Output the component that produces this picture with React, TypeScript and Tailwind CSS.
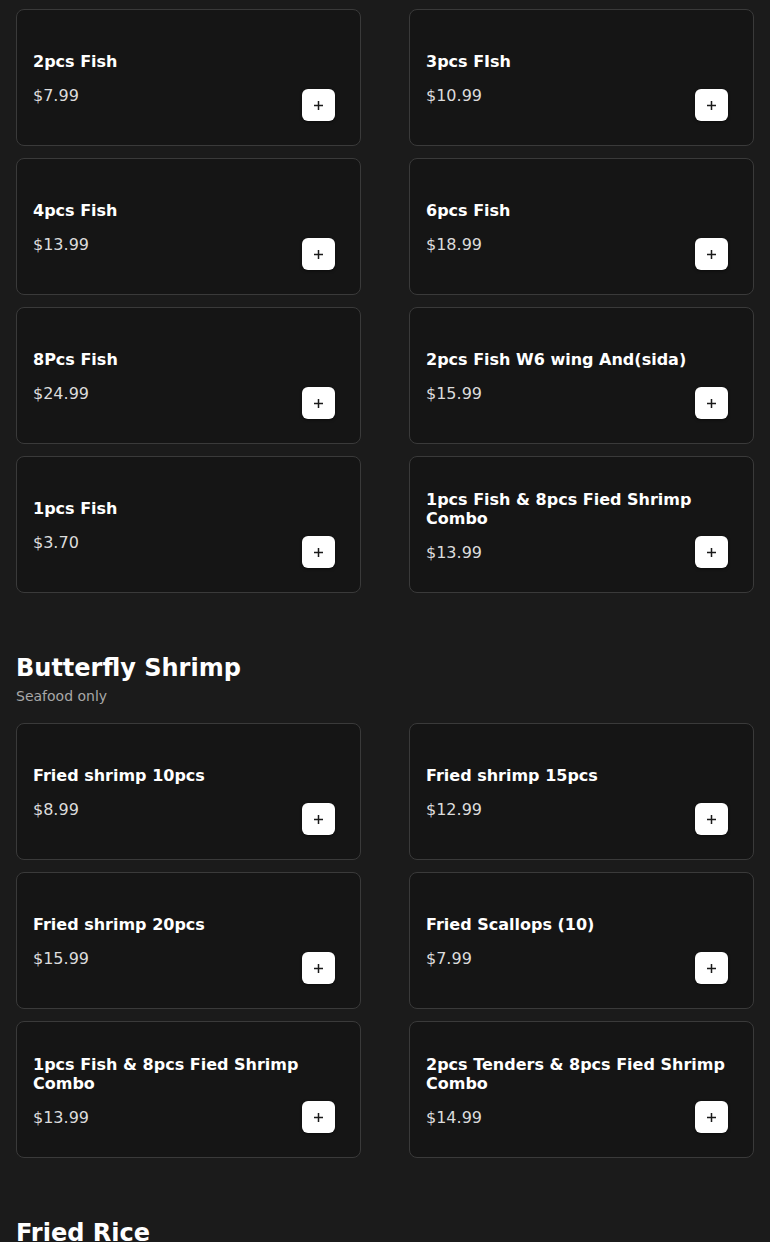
type MenuItem = { name: string; price: string };

type MenuSection = {
  title?: string;
  subtitle?: string;
  items: MenuItem[];
};

const sections: MenuSection[] = [
  {
    items: [
      { name: "2pcs Fish", price: "$7.99" },
      { name: "3pcs FIsh", price: "$10.99" },
      { name: "4pcs Fish", price: "$13.99" },
      { name: "6pcs Fish", price: "$18.99" },
      { name: "8Pcs Fish", price: "$24.99" },
      { name: "2pcs Fish W6 wing And(sida)", price: "$15.99" },
      { name: "1pcs Fish", price: "$3.70" },
      { name: "1pcs Fish & 8pcs Fied Shrimp Combo", price: "$13.99" },
    ],
  },
  {
    title: "Butterfly Shrimp",
    subtitle: "Seafood only",
    items: [
      { name: "Fried shrimp 10pcs", price: "$8.99" },
      { name: "Fried shrimp 15pcs", price: "$12.99" },
      { name: "Fried shrimp 20pcs", price: "$15.99" },
      { name: "Fried Scallops (10)", price: "$7.99" },
      { name: "1pcs Fish & 8pcs Fied Shrimp Combo", price: "$13.99" },
      { name: "2pcs Tenders & 8pcs Fied Shrimp Combo", price: "$14.99" },
    ],
  },
  { title: "Fried Rice", items: [] },
];

function PlusIcon() {
  return (
    <svg width="11" height="11" viewBox="0 0 11 11" aria-hidden>
      <path d="M5.5 1v9M1 5.5h9" stroke="#1a1a1a" strokeWidth="1.5" />
    </svg>
  );
}

/** One dish card: name and price centred vertically, add button pinned bottom-right. */
function ItemCard({ item }: { item: MenuItem }) {
  return (
    <div className="relative flex h-[137px] items-center rounded-lg border border-[#3a3a3a] bg-[#151515] px-4">
      <div className="mt-[2px] flex flex-col gap-[15px]">
        <div className="text-base font-bold leading-[19px] text-white">
          {item.name}
        </div>
        <div className="text-base leading-[19px] text-[#dcdcdc]">
          {item.price}
        </div>
      </div>
      <button
        type="button"
        aria-label={`Add ${item.name}`}
        className="absolute bottom-6 right-[25px] flex h-8 w-[33px] items-center justify-center rounded-md bg-white shadow-[0_1px_3px_rgba(0,0,0,0.5)]"
      >
        <PlusIcon />
      </button>
    </div>
  );
}

export default function App() {
  return (
    <div
      className="min-h-[1242px] overflow-hidden bg-[#1b1b1b] px-4 pt-[9px]"
      style={{ fontFamily: '"DejaVu Sans", sans-serif' }}
    >
      {sections.map((section, i) => (
        <section key={i} className={i > 0 ? "mt-[59px]" : ""}>
          {section.title && (
            <div className="mb-[17px]">
              <h2 className="text-[24px] font-bold leading-[32px] text-white">
                {section.title}
              </h2>
              {section.subtitle && (
                <p className="mt-[2px] text-sm leading-5 text-[#a8a8a8]">
                  {section.subtitle}
                </p>
              )}
            </div>
          )}
          {section.items.length > 0 && (
            <div className="grid grid-cols-2 gap-x-12 gap-y-3">
              {section.items.map((item, j) => (
                <ItemCard key={j} item={item} />
              ))}
            </div>
          )}
        </section>
      ))}
    </div>
  );
}
